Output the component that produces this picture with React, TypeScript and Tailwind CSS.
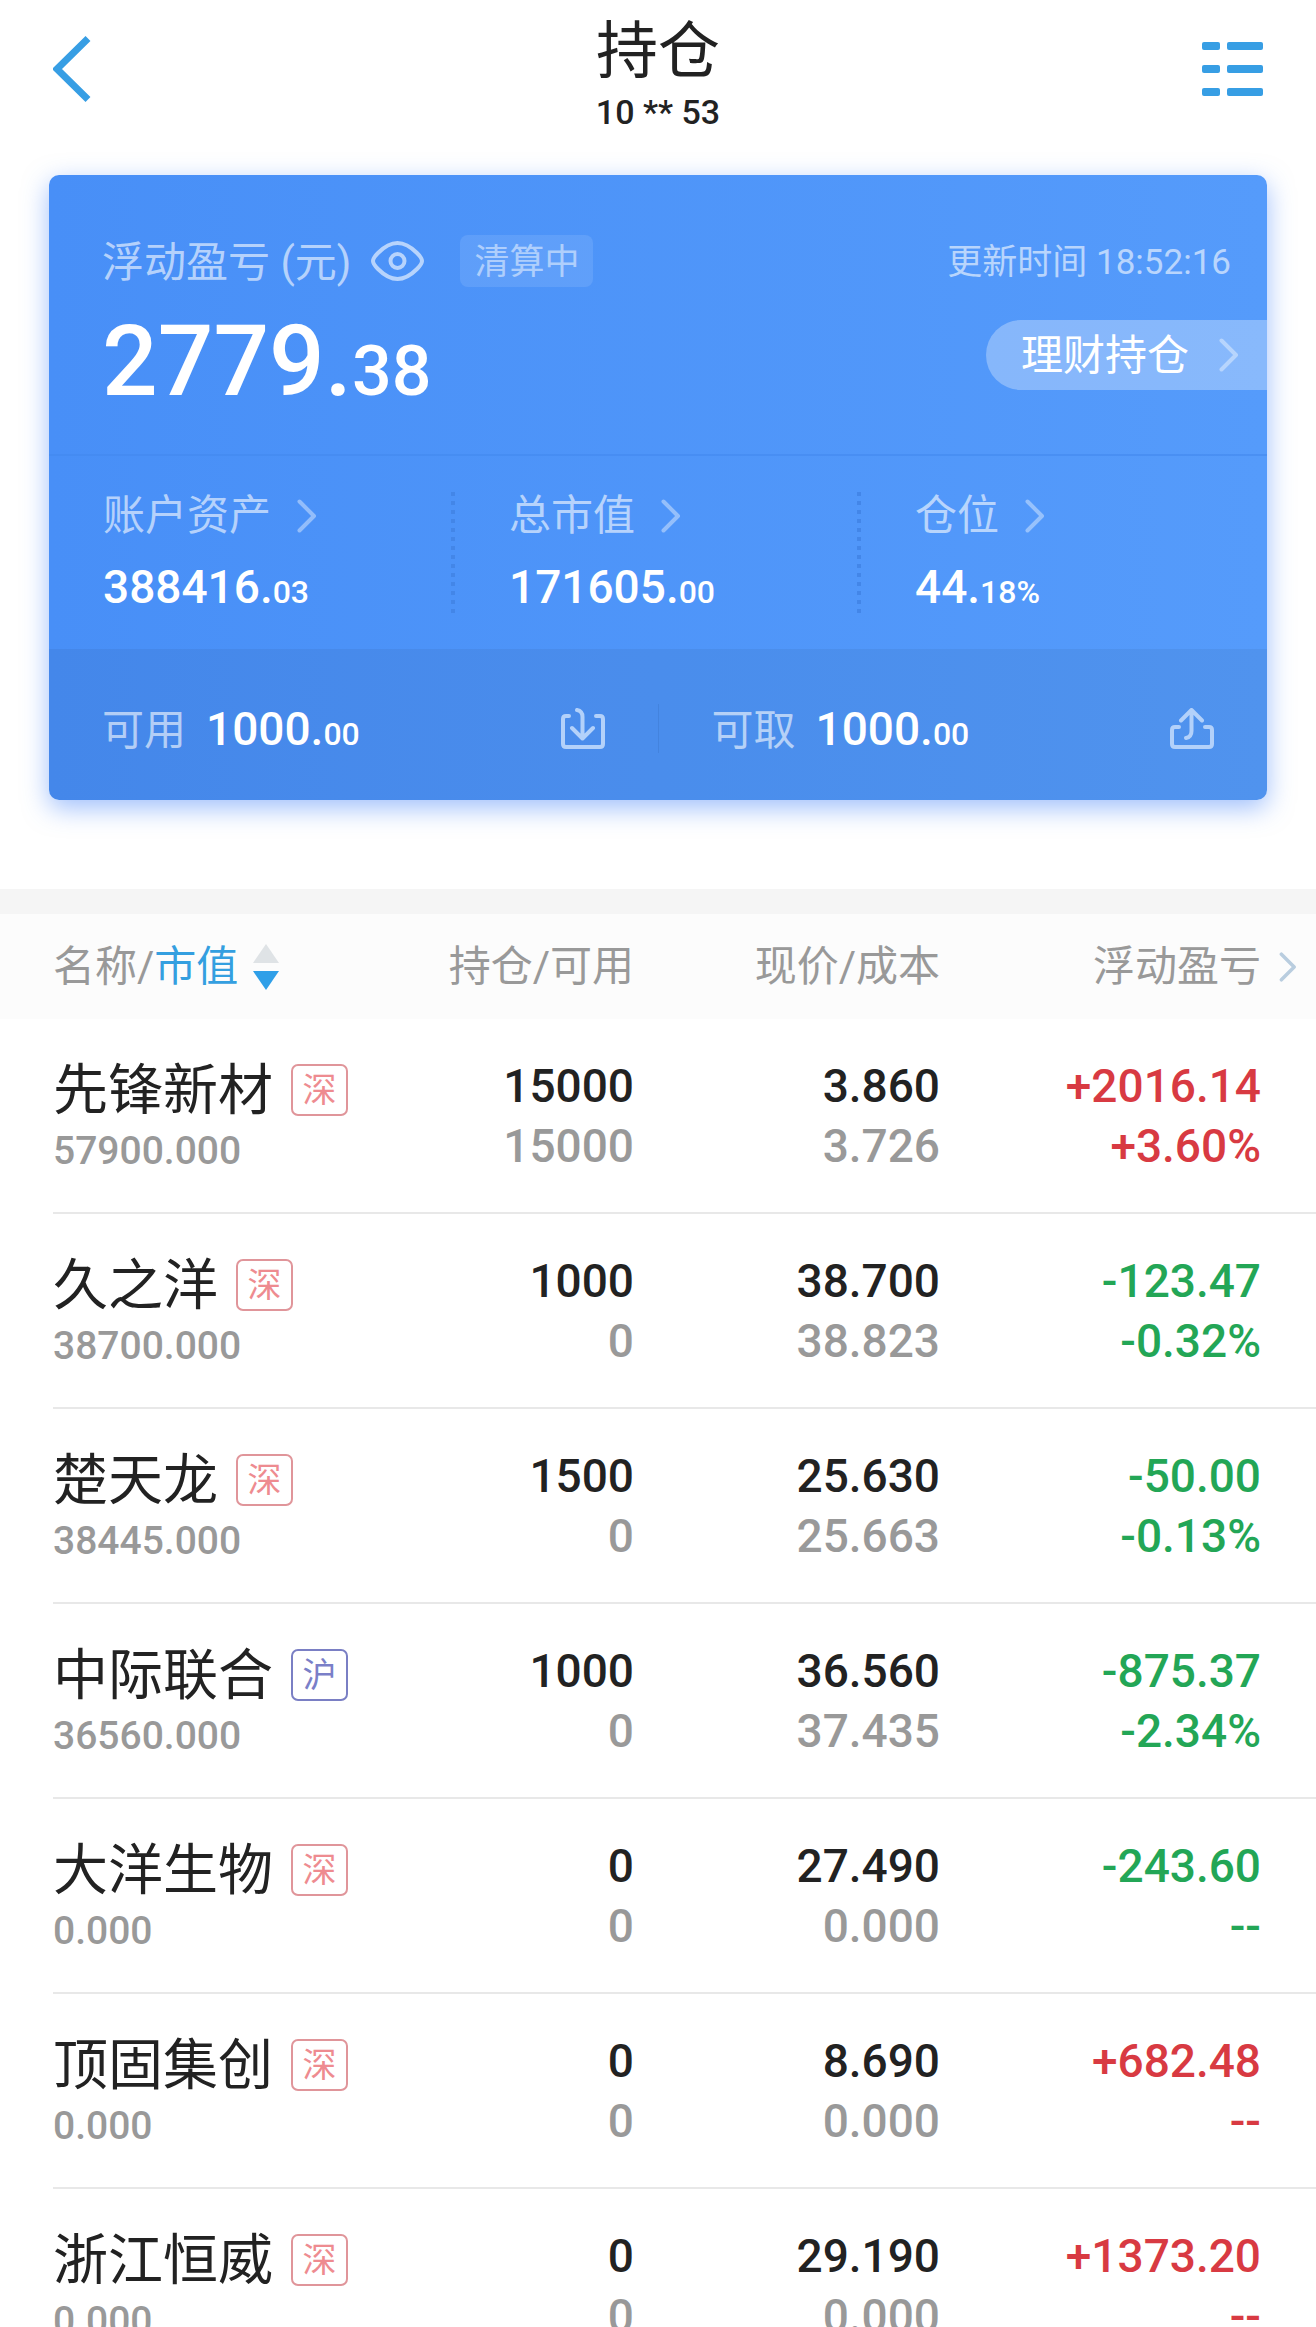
type Market = '深' | '沪';

interface Holding {
  name: string;
  market: Market;
  value: string;
  held: string;
  available: string;
  price: string;
  cost: string;
  profit: string;
  rate: string;
}

const holdings: Holding[] = [
  { name: '先锋新材', market: '深', value: '57900.000', held: '15000', available: '15000', price: '3.860', cost: '3.726', profit: '+2016.14', rate: '+3.60%' },
  { name: '久之洋', market: '深', value: '38700.000', held: '1000', available: '0', price: '38.700', cost: '38.823', profit: '-123.47', rate: '-0.32%' },
  { name: '楚天龙', market: '深', value: '38445.000', held: '1500', available: '0', price: '25.630', cost: '25.663', profit: '-50.00', rate: '-0.13%' },
  { name: '中际联合', market: '沪', value: '36560.000', held: '1000', available: '0', price: '36.560', cost: '37.435', profit: '-875.37', rate: '-2.34%' },
  { name: '大洋生物', market: '深', value: '0.000', held: '0', available: '0', price: '27.490', cost: '0.000', profit: '-243.60', rate: '--' },
  { name: '顶固集创', market: '深', value: '0.000', held: '0', available: '0', price: '8.690', cost: '0.000', profit: '+682.48', rate: '--' },
  { name: '浙江恒威', market: '深', value: '0.000', held: '0', available: '0', price: '29.190', cost: '0.000', profit: '+1373.20', rate: '--' },
];

function Chevron({ className }: { className: string }) {
  return (
    <svg viewBox="0 0 20 34" fill="none" stroke="currentColor" strokeWidth="4" strokeLinecap="round" strokeLinejoin="round" className={className} aria-hidden="true">
      <path d="M2.5 2.5 17 17 2.5 31.5" />
    </svg>
  );
}

function Header() {
  return (
    <header className="flex h-[175px] items-start justify-between px-[53px]">
      <button type="button" aria-label="返回" className="mt-9 w-[61px] text-[#379ee4]">
        <svg viewBox="0 0 38 66" fill="none" stroke="currentColor" strokeWidth="7" className="h-[66px] w-[38px]">
          <path d="M35 2.5 4 33 35 63.5" />
        </svg>
      </button>
      <div className="text-center text-[#222]">
        <h1 className="mt-4 text-[62px] leading-[72px]">持仓</h1>
        <p className="mt-1 text-[34px] leading-10 font-medium">10 ** 53</p>
      </div>
      <button type="button" aria-label="菜单" className="mt-[42px] text-[#379ee4]">
        <svg viewBox="0 0 61 55" fill="currentColor" className="h-[55px] w-[61px]">
          {[0, 23, 46].map((y) => (
            <g key={y}>
              <rect x="0" y={y} width="18" height="8" rx="2" />
              <rect x="25" y={y} width="36" height="8" rx="2" />
            </g>
          ))}
        </svg>
      </button>
    </header>
  );
}

function Amount({ whole, decimal }: { whole: string; decimal: string }) {
  return (
    <span className="text-[46px] font-medium text-white">
      {whole}.<span className="text-[32px]">{decimal}</span>
    </span>
  );
}

function Stat({ label, whole, decimal, divided }: { label: string; whole: string; decimal: string; divided: boolean }) {
  return (
    <div className="relative flex-1 pt-[34px] pl-[54px]">
      <button type="button" className="flex items-center gap-[26px] text-[42px] leading-[52px] text-white/60">
        {label}
        <Chevron className="h-[34px] w-5 text-white/40" />
      </button>
      <p className="mt-[15px] leading-[60px]">
        <Amount whole={whole} decimal={decimal} />
      </p>
      {divided && (
        <span className="absolute top-9 right-0 h-[122px] w-1 bg-[repeating-linear-gradient(to_bottom,#4386e8_0px,#4386e8_4px,transparent_4px,transparent_9px)]" />
      )}
    </div>
  );
}

function SummaryCard() {
  return (
    <section className="mx-[49px] overflow-hidden rounded-[10px] bg-linear-to-r from-[#488ff7] to-[#559bfb] shadow-[0_8px_26px_rgba(64,128,250,0.5)]">
      <div className="flex h-[281px] justify-between border-b-2 border-[#4389ef]/60 pt-[60px] pl-[53px]">
        <div>
          <div className="flex h-[52px] items-center text-white/60">
            <h2 className="pt-1 text-[42px] leading-12">浮动盈亏 (元)</h2>
            <button type="button" aria-label="显示或隐藏金额" className="ml-5">
              <svg viewBox="0 0 53 40" fill="none" stroke="currentColor" strokeWidth="4" className="h-10 w-[53px]">
                <path d="M2 20Q2 17 7 12 17 2 26.500 2T46 12Q51 17 51 20T46 28Q36 38 26.500 38T7 28Q2 23 2 20Z" />
                <circle cx="26.500" cy="20" r="7" />
              </svg>
            </button>
            <span className="ml-9 rounded-lg bg-white/10 px-[14px] pt-1 text-[35px] leading-12 text-white/50">清算中</span>
          </div>
          <p className="mt-[15px] text-[98px] leading-[120px] font-medium text-white">
            2779.<span className="text-[70px]">38</span>
          </p>
        </div>
        <div className="flex flex-col items-end">
          <p className="pt-1 pr-9 text-[35px] leading-12 text-white/60">更新时间 18:52:16</p>
          <button type="button" className="mt-[33px] flex h-[70px] items-center gap-[30px] rounded-l-full bg-white/30 pr-7 pl-[35px] text-[42px] text-white">
            理财持仓
            <Chevron className="h-[34px] w-5 text-white/40" />
          </button>
        </div>
      </div>

      <div className="flex h-[193px]">
        <Stat label="账户资产" whole="388416" decimal="03" divided />
        <Stat label="总市值" whole="171605" decimal="00" divided />
        <Stat label="仓位" whole="44" decimal="18%" divided={false} />
      </div>

      <div className="flex h-[151px] items-center bg-black/5 pt-2">
        <div className="flex flex-1 items-center justify-between px-[53px]">
          <p className="pt-3 leading-[60px]">
            <span className="mr-5 text-[42px] text-white/60">可用</span>
            <Amount whole="1000" decimal="00" />
          </p>
          <button type="button" aria-label="转入">
            <svg viewBox="0 0 44 42" fill="none" stroke="#b3d1fa" strokeWidth="4" strokeLinecap="round" strokeLinejoin="round" className="h-[42px] w-11">
              <path d="M8 8H5Q2 8 2 11v25q0 3 3 3h34q3 0 3-3V11q0-3-3-3h-4" />
              <path d="M16 2q5.500 1 5.500 7v21M11 20l10.500 10.500L32 20" />
            </svg>
          </button>
        </div>
        <span className="h-[49px] w-px bg-[#4383de]" />
        <div className="flex flex-1 items-center justify-between px-[53px]">
          <p className="pt-3 leading-[60px]">
            <span className="mr-5 text-[42px] text-white/60">可取</span>
            <Amount whole="1000" decimal="00" />
          </p>
          <button type="button" aria-label="转出">
            <svg viewBox="0 0 44 42" fill="none" stroke="#b3d1fa" strokeWidth="4" strokeLinecap="round" strokeLinejoin="round" className="h-[42px] w-11">
              <path d="M9 19H5q-3 0-3 3v14q0 3 3 3h34q3 0 3-3V22q0-3-3-3h-4" />
              <path d="M16 30q5.500-1 5.500-7V2.500M11 12.500l10.500-10.500L32 12.500" />
            </svg>
          </button>
        </div>
      </div>
    </section>
  );
}

function MarketBadge({ market }: { market: Market }) {
  return (
    <span
      className={
        market === '深'
          ? 'h-[52px] w-[57px] rounded-[7px] border-2 border-[#e0959a] text-center text-[34px] leading-[48px] text-[#ee8b90]'
          : 'h-[52px] w-[57px] rounded-[7px] border-2 border-[#7a7fc4] text-center text-[34px] leading-[48px] text-[#7a7fc8]'
      }
    >
      {market}
    </span>
  );
}

function HoldingRow({ item }: { item: Holding }) {
  const cell = 'border-b-2 border-[#e8e8e8] p-0 pt-[37px] text-right align-top text-[46px] leading-[60px] font-medium';
  const up = item.profit.startsWith('+');
  return (
    <tr>
      <td className="p-0">
        <div className="ml-[53px] h-[195px] border-b-2 border-[#e8e8e8] pt-[41px]">
          <div className="flex h-[60px] items-center gap-[18px] text-[55px] leading-[60px] whitespace-nowrap text-[#222]">
            {item.name}
            <MarketBadge market={item.market} />
          </div>
          <p className="mt-1.5 text-[39px] leading-[50px] font-medium text-[#999]">{item.value}</p>
        </div>
      </td>
      <td className={cell}>
        <p className="text-[#222]">{item.held}</p>
        <p className="text-[#999]">{item.available}</p>
      </td>
      <td className={cell}>
        <p className="text-[#222]">{item.price}</p>
        <p className="text-[#999]">{item.cost}</p>
      </td>
      <td className={cell}>
        <div className={up ? 'text-[#d83a42]' : 'text-[#23a656]'}>
          <p>{item.profit}</p>
          <p>{item.rate}</p>
        </div>
      </td>
      <td className="border-b-2 border-[#e8e8e8] p-0" />
    </tr>
  );
}

function HoldingsTable() {
  return (
    <table className="mt-[89px] w-full table-fixed border-separate border-spacing-0 border-t-[25px] border-[#f5f5f5]">
      <colgroup>
        <col />
        <col className="w-[238px]" />
        <col className="w-[306px]" />
        <col className="w-[321px]" />
        <col className="w-[55px]" />
      </colgroup>
      <thead>
        <tr className="h-[105px] bg-[#fcfcfc] text-[42px] whitespace-nowrap text-[#999]">
          <th scope="col" className="p-0 pl-[53px] text-left font-normal">
            <button type="button" className="flex items-center">
              名称/<span className="text-[#349fe0]">市值</span>
              <svg viewBox="0 0 28 46" className="ml-[14px] h-[46px] w-7" aria-hidden="true">
                <path d="M14 0 27 19H1Z" fill="#dfe3e6" />
                <path d="M14 46 27 27H1Z" fill="#2f9fe8" />
              </svg>
            </button>
          </th>
          <th scope="col" className="p-0 text-right font-normal">持仓/可用</th>
          <th scope="col" className="p-0 text-right font-normal">现价/成本</th>
          <th scope="col" className="p-0 text-right font-normal">浮动盈亏</th>
          <th scope="col" className="p-0 font-normal">
            <button type="button" aria-label="更多列" className="flex w-full pl-[18px]">
              <Chevron className="h-[30px] w-[18px] text-[#b9cddf]" />
            </button>
          </th>
        </tr>
      </thead>
      <tbody>
        {holdings.map((item) => (
          <HoldingRow key={item.name} item={item} />
        ))}
      </tbody>
    </table>
  );
}

export default function App() {
  return (
    <main lang="zh-CN" className="h-screen overflow-y-auto bg-white font-[Roboto,'Noto_Sans_CJK_SC',sans-serif] [scrollbar-width:none]">
      <Header />
      <SummaryCard />
      <HoldingsTable />
    </main>
  );
}
